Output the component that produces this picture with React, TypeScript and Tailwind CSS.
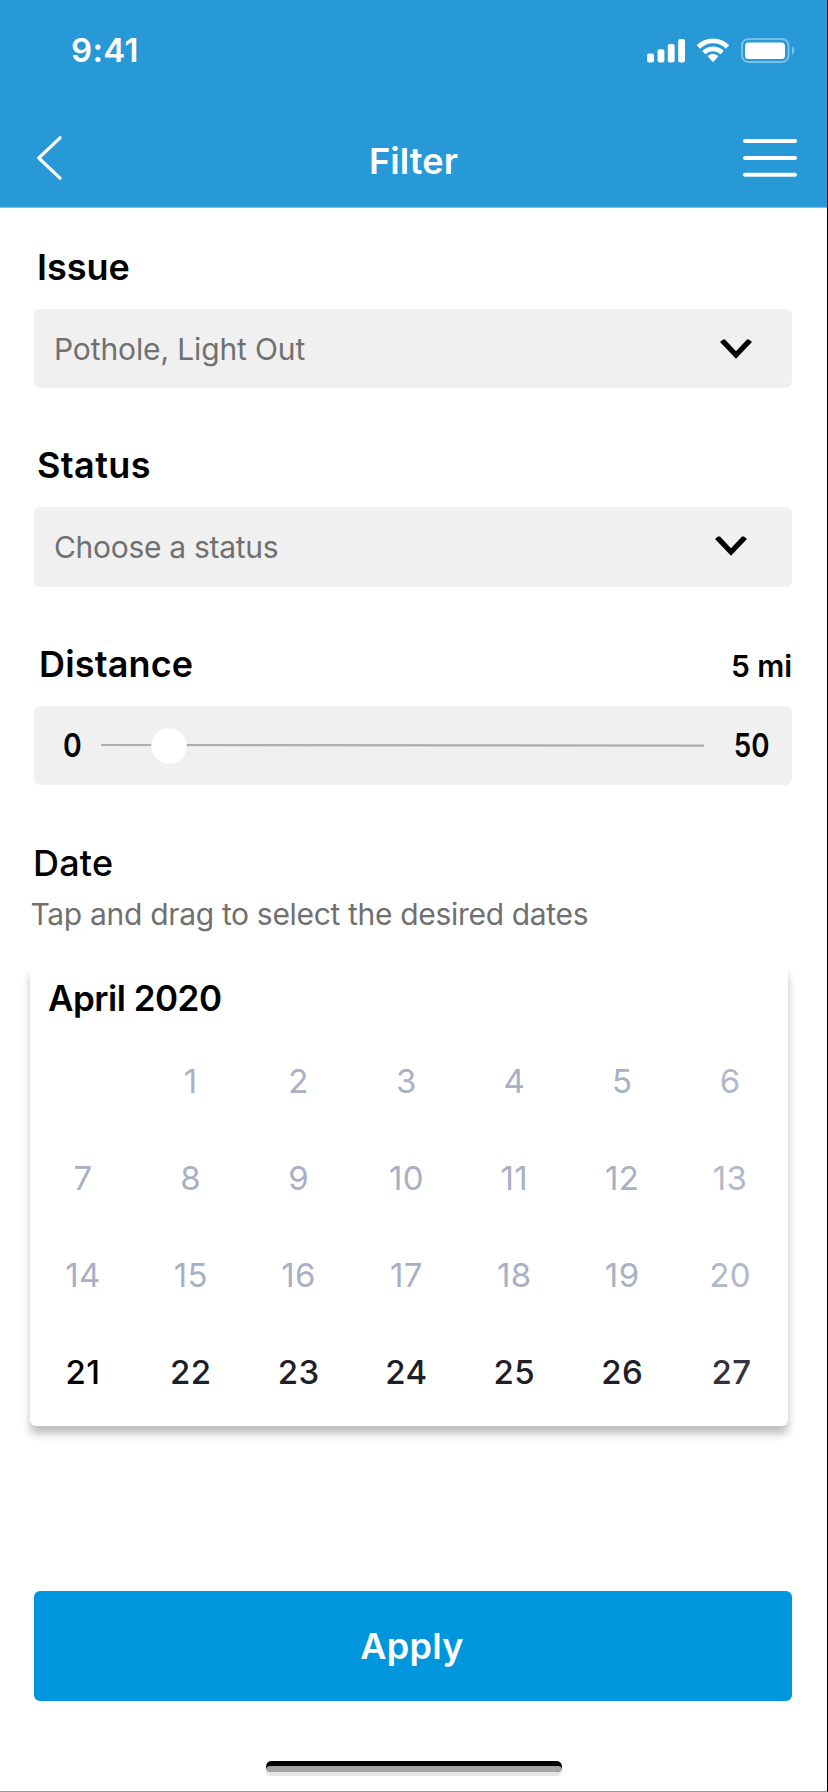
import React from "react";

const SignalIcon = () => (
  <svg width="38" height="25" viewBox="0 0 38 25" fill="white">
    <rect x="0" y="15.5" width="7" height="9" rx="2" />
    <rect x="10.6" y="11.3" width="6.8" height="13.2" rx="2" />
    <rect x="20.8" y="6" width="6.8" height="18.5" rx="2" />
    <rect x="31.2" y="1" width="6.8" height="23.5" rx="2" />
  </svg>
);

const WifiIcon = () => (
  <svg width="34" height="25" viewBox="0 0 34 25" fill="white">
    <path d="M17 5.2c4.7 0 9.1 1.8 12.4 5 .25.25.65.25.9 0l2.5-2.5c.26-.26.26-.68 0-.94C24-1.7 10-1.7 1.2 6.8c-.26.26-.26.68 0 .94l2.5 2.5c.25.25.65.25.9 0C7.9 7 12.3 5.2 17 5.2z" />
    <path d="M17 13.3c2.6 0 5 .95 6.9 2.7.26.25.66.24.91 0l2.5-2.5c.26-.26.26-.68 0-.95-5.8-5.5-14.8-5.5-20.6 0-.26.27-.26.69 0 .95l2.5 2.5c.25.25.65.25.91 0 1.9-1.75 4.3-2.7 6.88-2.7z" />
    <path d="M21.9 18.8c.26-.27.26-.7-.02-.95-2.8-2.35-6.96-2.35-9.76 0-.28.25-.29.68-.02.95l4.45 4.9c.25.26.65.26.9 0z" />
  </svg>
);

const BatteryIcon = () => (
  <svg width="54" height="25" viewBox="0 0 54 25">
    <rect x="1" y="1" width="46.5" height="23" rx="6.5" fill="none" stroke="white" strokeOpacity="0.38" strokeWidth="2" />
    <rect x="4" y="4.5" width="40" height="16.5" rx="3.5" fill="white" />
    <path d="M51 8.5c3.3 1.7 3.3 6.5 0 8.2z" fill="white" fillOpacity="0.4" />
  </svg>
);

const BackIcon = () => (
  <svg width="26" height="44" viewBox="0 0 26 44" fill="none" stroke="white" strokeWidth="3.2" strokeLinecap="round" strokeLinejoin="round">
    <path d="M23 1.8L1.8 22L23 42.2" />
  </svg>
);

const MenuIcon = () => (
  <svg width="54" height="38" viewBox="0 0 54 38" stroke="white" strokeWidth="4" strokeLinecap="round">
    <path d="M2 2h50M2 19h50M2 35.8h50" />
  </svg>
);

const ChevronIcon = () => (
  <svg width="32" height="20" viewBox="0 0 32 20">
    <path d="M0 3L3 .6H5L16 12.3L27 .6H29L32 3L16 19.8z" />
  </svg>
);

const weeks: (number | null)[][] = [
  [null, 1, 2, 3, 4, 5, 6],
  [7, 8, 9, 10, 11, 12, 13],
  [14, 15, 16, 17, 18, 19, 20],
  [21, 22, 23, 24, 25, 26, 27],
];

const dayColor = (day: number | null) => {
  if (day === null || day < 21) {
    return day !== null && day > 5 && (day + 1) % 7 === 0 ? "text-[#b2b8ca]" : "text-[#a9b0c5]";
  }
  if (day === 21) return "font-medium text-black";
  if (day === 27) return "pl-[3px] font-medium text-[#32333b]";
  return "font-medium text-[#1e2027]";
};

export default function App() {
  return (
    <div className="flex h-[1792px] w-[828px] flex-col overflow-hidden border-r border-b border-r-black border-b-[#999999] bg-white font-['Inter',sans-serif] text-black">
      <header className="h-[208px] shrink-0 border-b border-[#a5b4bc] bg-[#2699d6] text-white">
        <div className="flex h-[101px] items-center justify-between pl-[71px] pr-[32px]">
          <span className="text-[33px] font-semibold leading-none tracking-[0.3px]">9:41</span>
          <div className="flex items-center">
            <SignalIcon />
            <div className="ml-[11px]"><WifiIcon /></div>
            <div className="ml-[11px]"><BatteryIcon /></div>
          </div>
        </div>
        <div className="grid h-[106px] grid-cols-[1fr_auto_1fr] items-center pl-[37px] pr-[30px] pt-[8px]">
          <BackIcon />
          <h1 className="-ml-[7px] pt-[6px] text-center text-[36px] font-semibold leading-none tracking-[0.1px]">Filter</h1>
          <div className="flex justify-end"><MenuIcon /></div>
        </div>
      </header>

      <main className="flex flex-1 flex-col pl-[34px] pr-[35px] pt-[17px]">
        <section>
          <h2 className="h-[84px] pl-[3px] text-[36px] font-semibold leading-[84px] tracking-[0px]">Issue</h2>
          <div className="flex h-[79px] items-center justify-between rounded-[6px] bg-[#f0f0f0] pl-[20px] pr-[40px]">
            <span className="pt-px text-[30px] tracking-[-0.13px] text-[#707070]">Pothole, Light Out</span>
            <ChevronIcon />
          </div>
        </section>

        <section className="mt-[36px]">
          <h2 className="h-[83px] pl-[3px] text-[36px] font-semibold leading-[83px] tracking-[0.4px]">Status</h2>
          <div className="flex h-[80px] items-center justify-between rounded-[6px] bg-[#f0f0f0] pl-[20px] pr-[45px]">
            <span className="pt-px text-[30px] tracking-[-0.3px] text-[#707070]">Choose a status</span>
            <div className="-mt-[3px]"><ChevronIcon /></div>
          </div>
        </section>

        <section className="mt-[35px]">
          <div className="flex h-[84px] justify-between pl-[5px]">
            <h2 className="text-[36px] font-semibold leading-[85px] tracking-[0.15px]">Distance</h2>
            <span className="text-[30px] font-semibold leading-[89px] tracking-[-0.1px]">5 mi</span>
          </div>
          <div className="flex h-[79px] items-center rounded-[6px] bg-[#f0f0f0] pl-[29px] pr-[22px]">
            <span className="w-[38px]">
              <span className="inline-block origin-left scale-x-[0.86] text-[33px] font-semibold">0</span>
            </span>
            <svg width="603" height="36" viewBox="0 0 603 36">
              <path d="M0 17L603 17.7" stroke="#adadad" strokeWidth="2.2" />
              <circle cx="68" cy="18" r="17.8" fill="white" />
            </svg>
            <span className="flex-1 text-right">
              <span className="inline-block origin-right scale-x-[0.84] text-[33px] font-semibold">50</span>
            </span>
          </div>
        </section>

        <section className="pt-[56px]">
          <h2 className="-ml-px h-[44px] text-[36px] font-medium leading-[45px] tracking-[0.2px]">Date</h2>
          <p className="-ml-[3.5px] mt-[9px] h-[40px] whitespace-nowrap text-[30px] leading-[40px] tracking-[-0.32px] text-[#707070]">
            Tap and drag to select the desired dates
          </p>
          <div className="-ml-[4px] mr-[4px] mt-[32px] h-[460px] rounded-[6px] bg-white pt-[10px] shadow-[0_8px_8px_rgba(0,0,0,0.25)]">
            <h3 className="h-[44px] pl-[18px] text-[35px] font-semibold leading-[44px] tracking-[-0.5px]">April 2020</h3>
            <div className="-ml-[1px] mt-[13px] grid w-[755px] grid-cols-7">
              {weeks.flat().map((day, i) => (
                <div key={i} className={`h-[97px] text-center text-[33px] leading-[97px] tracking-[0.4px] ${dayColor(day)}`}>
                  {day}
                </div>
              ))}
            </div>
          </div>
        </section>

        <button className="mt-[165px] h-[110px] shrink-0 rounded-[6px] bg-[#0096dd] pr-[2px] text-[36px] font-semibold leading-[110px] tracking-[0.3px] text-white">
          Apply
        </button>

        <div className="ml-[232px] mt-[60px] h-[15px] w-[296px] shrink-0 overflow-hidden rounded-[5px] bg-[#e5e5e5]">
          <div className="h-[11px] overflow-hidden rounded-[5px] bg-black pt-[5px]">
            <div className="h-[6px] rounded-t-[4px] bg-[#a3a3a3]" />
          </div>
        </div>
      </main>
    </div>
  );
}
